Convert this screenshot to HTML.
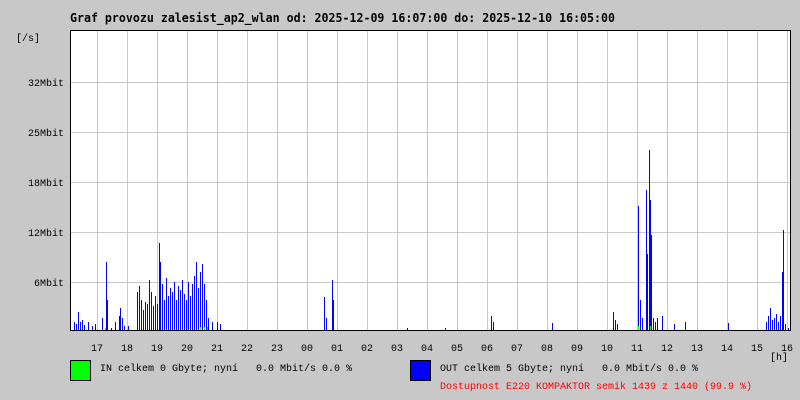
<!DOCTYPE html>
<html><head><style>
body{margin:0;background:#c8c8c8;}
svg{display:block}
text{font-family:"Liberation Mono","DejaVu Sans Mono",monospace;font-size:10px;fill:#000;white-space:pre}
</style></head><body>
<svg width="800" height="400" xmlns="http://www.w3.org/2000/svg" xml:space="preserve">
<rect width="800" height="400" fill="#c8c8c8"/>
<text x="70" y="22" textLength="545" lengthAdjust="spacingAndGlyphs" style="font-family:'DejaVu Sans Mono',monospace;font-weight:bold;font-size:12px">Graf provozu zalesist_ap2_wlan od: 2025-12-09 16:07:00 do: 2025-12-10 16:05:00</text>
<rect x="70" y="30" width="720" height="300" fill="#fff"/>
<g stroke="#c8c8c8" stroke-width="1" shape-rendering="crispEdges">
<path d="M97.5 31V330M127.5 31V330M157.5 31V330M187.5 31V330M217.5 31V330M247.5 31V330M277.5 31V330M307.5 31V330M337.5 31V330M367.5 31V330M397.5 31V330M427.5 31V330M457.5 31V330M487.5 31V330M517.5 31V330M547.5 31V330M577.5 31V330M607.5 31V330M637.5 31V330M667.5 31V330M697.5 31V330M727.5 31V330M757.5 31V330M787.5 31V330"/>
<path d="M71 82.5H790M71 132.5H790M71 182.5H790M71 232.5H790M71 282.5H790"/>
</g>
<g stroke="#0000ff" stroke-width="1" fill="none" shape-rendering="crispEdges">
<path d="M74.5 330V322M76.5 330V324M78.5 330V312M80.5 330V322M82.5 330V320M84.5 330V325M88.5 330V322M92.5 330V326M95.5 330V324M102.5 330V318M106.5 330V262M107.5 330V300M111.5 330V328M115.5 330V322M119.5 330V316M120.5 330V308M122.5 330V318M124.5 330V326M128.5 330V326M137.5 330V292M139.5 330V286M141.5 330V300M143.5 330V310M145.5 330V302M147.5 330V304M149.5 330V280M151.5 330V292M153.5 330V306M155.5 330V296M157.5 330V304M159.5 330V243M160.5 330V262M162.5 330V284M164.5 330V300M166.5 330V278M168.5 330V296M170.5 330V288M172.5 330V292M174.5 330V282M176.5 330V300M178.5 330V286M180.5 330V290M182.5 330V280M184.5 330V294M186.5 330V300M188.5 330V282M190.5 330V296M192.5 330V284M194.5 330V276M196.5 330V262M198.5 330V288M200.5 330V272M202.5 330V264M204.5 330V284M206.5 330V300M208.5 330V318M212.5 330V322M217.5 330V322M220.5 330V324M324.5 330V297M326.5 330V318M332.5 330V280M333.5 330V300M407.5 330V328M445.5 330V328M491.5 330V316M493.5 330V322M552.5 330V323M613.5 330V312M615.5 330V320M617.5 330V324M638.5 330V206M640.5 330V300M642.5 330V318M646.5 330V190M647.5 330V254M649.5 330V150M650.5 330V200M651.5 330V235M653.5 330V318M655.5 330V322M657.5 330V318M662.5 330V316M674.5 330V324M685.5 330V322M728.5 330V323M766.5 330V322M768.5 330V316M770.5 330V308M772.5 330V320M774.5 330V318M776.5 330V314M778.5 330V322M780.5 330V316M782.5 330V272M783.5 330V230M785.5 330V324M788.5 330V328"/>
</g>
<g stroke="#00ff00" stroke-width="1" shape-rendering="crispEdges"><path d="M105.5 330V328M200.5 330V327M204.5 330V327M207.5 330V327M638.5 330V326M650.5 330V326"/></g>
<path d="M70.5 30V330.5M70 30.5H790.5V330M70 330.5H791" stroke="#000" stroke-width="1" fill="none" shape-rendering="crispEdges"/>
<text x="16" y="41">[/s]</text>
<text x="64" y="86" text-anchor="end">32Mbit</text>
<text x="64" y="136" text-anchor="end">25Mbit</text>
<text x="64" y="186" text-anchor="end">18Mbit</text>
<text x="64" y="236" text-anchor="end">12Mbit</text>
<text x="64" y="286" text-anchor="end">6Mbit</text>
<g text-anchor="middle" style="font-size:11px">
<text x="97" y="351">17</text><text x="127" y="351">18</text><text x="157" y="351">19</text><text x="187" y="351">20</text><text x="217" y="351">21</text><text x="247" y="351">22</text><text x="277" y="351">23</text><text x="307" y="351">00</text><text x="337" y="351">01</text><text x="367" y="351">02</text><text x="397" y="351">03</text><text x="427" y="351">04</text><text x="457" y="351">05</text><text x="487" y="351">06</text><text x="517" y="351">07</text><text x="547" y="351">08</text><text x="577" y="351">09</text><text x="607" y="351">10</text><text x="637" y="351">11</text><text x="667" y="351">12</text><text x="697" y="351">13</text><text x="727" y="351">14</text><text x="757" y="351">15</text><text x="787" y="351">16</text>
</g>
<text x="770" y="360">[h]</text>
<rect x="70.5" y="360.5" width="20" height="20" fill="#00ff00" stroke="#000" shape-rendering="crispEdges"/>
<text x="100" y="371">IN celkem 0 Gbyte; nyní   0.0 Mbit/s 0.0 %</text>
<rect x="410.5" y="360.5" width="20" height="20" fill="#0000ff" stroke="#000" shape-rendering="crispEdges"/>
<text x="440" y="371">OUT celkem 5 Gbyte; nyní   0.0 Mbit/s 0.0 %</text>
<text x="440" y="389" style="fill:#ff0000">Dostupnost E220 KOMPAKTOR semik 1439 z 1440 (99.9 %)</text>
</svg>
</body></html>
